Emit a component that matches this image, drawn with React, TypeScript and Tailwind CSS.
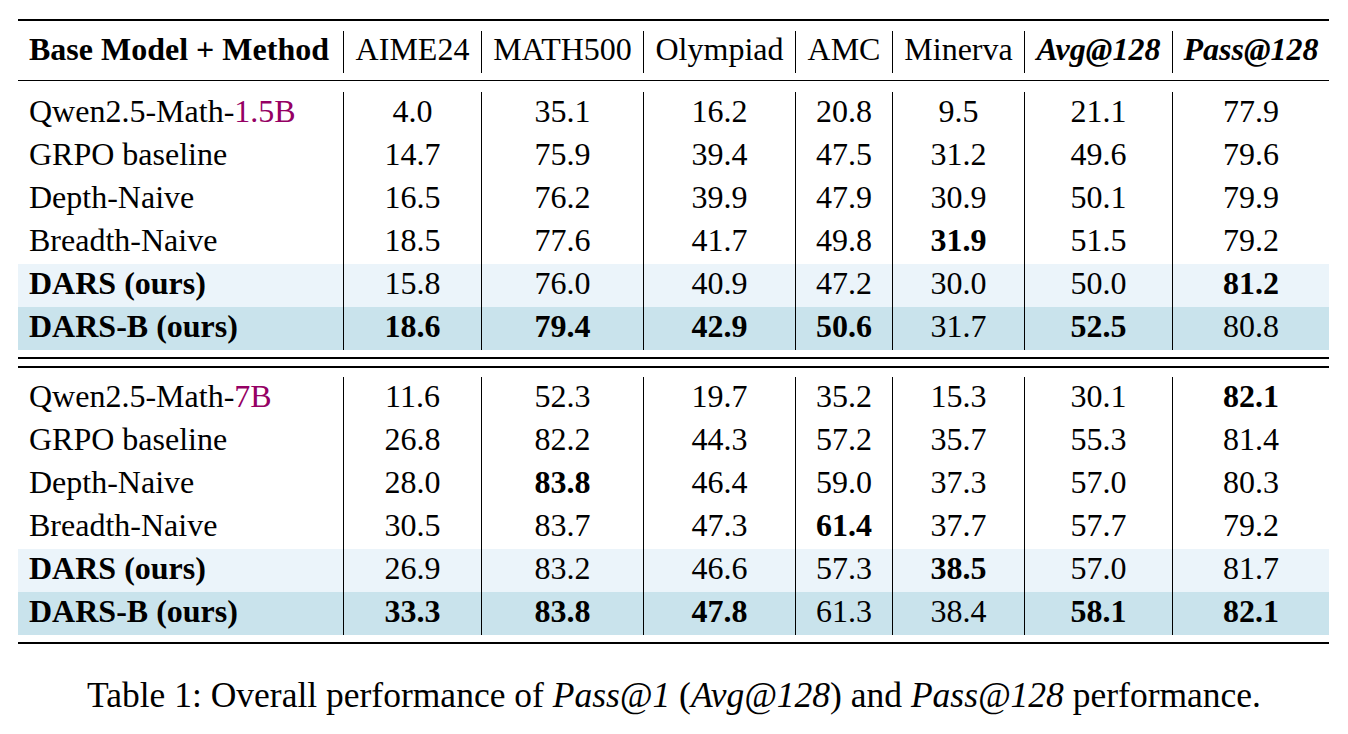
type Cell = { v: string; b?: boolean };
type Row = { name: React.ReactNode; bold?: boolean; bg?: string; cells: Cell[] };

const cols = "grid grid-cols-[325px_138px_162px_152px_97px_132px_148px_157px]";

const c = (s: string): Cell[] =>
  s.split(" ").map((x) => (x.startsWith("*") ? { v: x.slice(1), b: true } : { v: x }));

const top: Row[] = [
  {
    name: (
      <>
        Qwen2.5-Math-<span className="text-[#950064]">1.5B</span>
      </>
    ),
    cells: c("4.0 35.1 16.2 20.8 9.5 21.1 77.9"),
  },
  { name: "GRPO baseline", cells: c("14.7 75.9 39.4 47.5 31.2 49.6 79.6") },
  { name: "Depth-Naive", cells: c("16.5 76.2 39.9 47.9 30.9 50.1 79.9") },
  { name: "Breadth-Naive", cells: c("18.5 77.6 41.7 49.8 *31.9 51.5 79.2") },
  { name: "DARS (ours)", bold: true, bg: "light", cells: c("15.8 76.0 40.9 47.2 30.0 50.0 *81.2") },
  { name: "DARS-B (ours)", bold: true, bg: "dark", cells: c("*18.6 *79.4 *42.9 *50.6 31.7 *52.5 80.8") },
];

const bottom: Row[] = [
  {
    name: (
      <>
        Qwen2.5-Math-<span className="text-[#950064]">7B</span>
      </>
    ),
    cells: c("11.6 52.3 19.7 35.2 15.3 30.1 *82.1"),
  },
  { name: "GRPO baseline", cells: c("26.8 82.2 44.3 57.2 35.7 55.3 81.4") },
  { name: "Depth-Naive", cells: c("28.0 *83.8 46.4 59.0 37.3 57.0 80.3") },
  { name: "Breadth-Naive", cells: c("30.5 83.7 47.3 *61.4 37.7 57.7 79.2") },
  { name: "DARS (ours)", bold: true, bg: "light", cells: c("26.9 83.2 46.6 57.3 *38.5 57.0 81.7") },
  { name: "DARS-B (ours)", bold: true, bg: "dark", cells: c("*33.3 *83.8 *47.8 61.3 38.4 *58.1 *82.1") },
];

const DataRow = ({ row }: { row: Row }) => {
  const bg = row.bg === "light" ? "bg-[#ebf4fa]" : row.bg === "dark" ? "bg-[#c9e3ec]" : "";
  return (
    <div className={`${cols} h-[43px] ${bg}`}>
      <div className={`pl-[11px] leading-[39px] ${row.bold ? "font-bold" : ""}`}>{row.name}</div>
      {row.cells.map((cell, i) => (
        <div key={i} className={`border-l border-black text-center leading-[39px] ${cell.b ? "font-bold" : ""}`}>
          {cell.v}
        </div>
      ))}
    </div>
  );
};

const headers = ["AIME24", "MATH500", "Olympiad", "AMC", "Minerva"];

export default function App() {
  return (
    <div className="w-[1348px] h-[734px] bg-white text-black font-['Liberation_Serif',serif] text-[32px] pt-[19px]">
      <div className="ml-[18px] w-[1311px]">
        <div className="h-[2px] bg-black" />

        <div className={`${cols} h-[42px] mt-[10px]`}>
          <div className="pl-[11px] leading-[37px] font-bold">Base Model + Method</div>
          {headers.map((h) => (
            <div key={h} className="border-l border-black text-center leading-[37px]">
              {h}
            </div>
          ))}
          <div className="border-l border-black text-center leading-[37px] font-bold italic">Avg@128</div>
          <div className="border-l border-black text-center leading-[37px] font-bold italic">Pass@128</div>
        </div>

        <div className="h-px bg-black mt-[7px]" />

        <div className="mt-[11px]">
          {top.map((r, i) => (
            <DataRow key={i} row={r} />
          ))}
        </div>

        <div className="h-[2px] bg-black mt-[7px]" />
        <div className="h-[2px] bg-black mt-[7px]" />

        <div className="mt-[9px]">
          {bottom.map((r, i) => (
            <DataRow key={i} row={r} />
          ))}
        </div>

        <div className="h-[2px] bg-black mt-[7px]" />
      </div>

      <p className="mt-[31px] text-center text-[35.5px] leading-[40px]">
        Table 1: Overall performance of <i>Pass@1</i> (<i>Avg@128</i>) and <i>Pass@128</i> performance.
      </p>
    </div>
  );
}
